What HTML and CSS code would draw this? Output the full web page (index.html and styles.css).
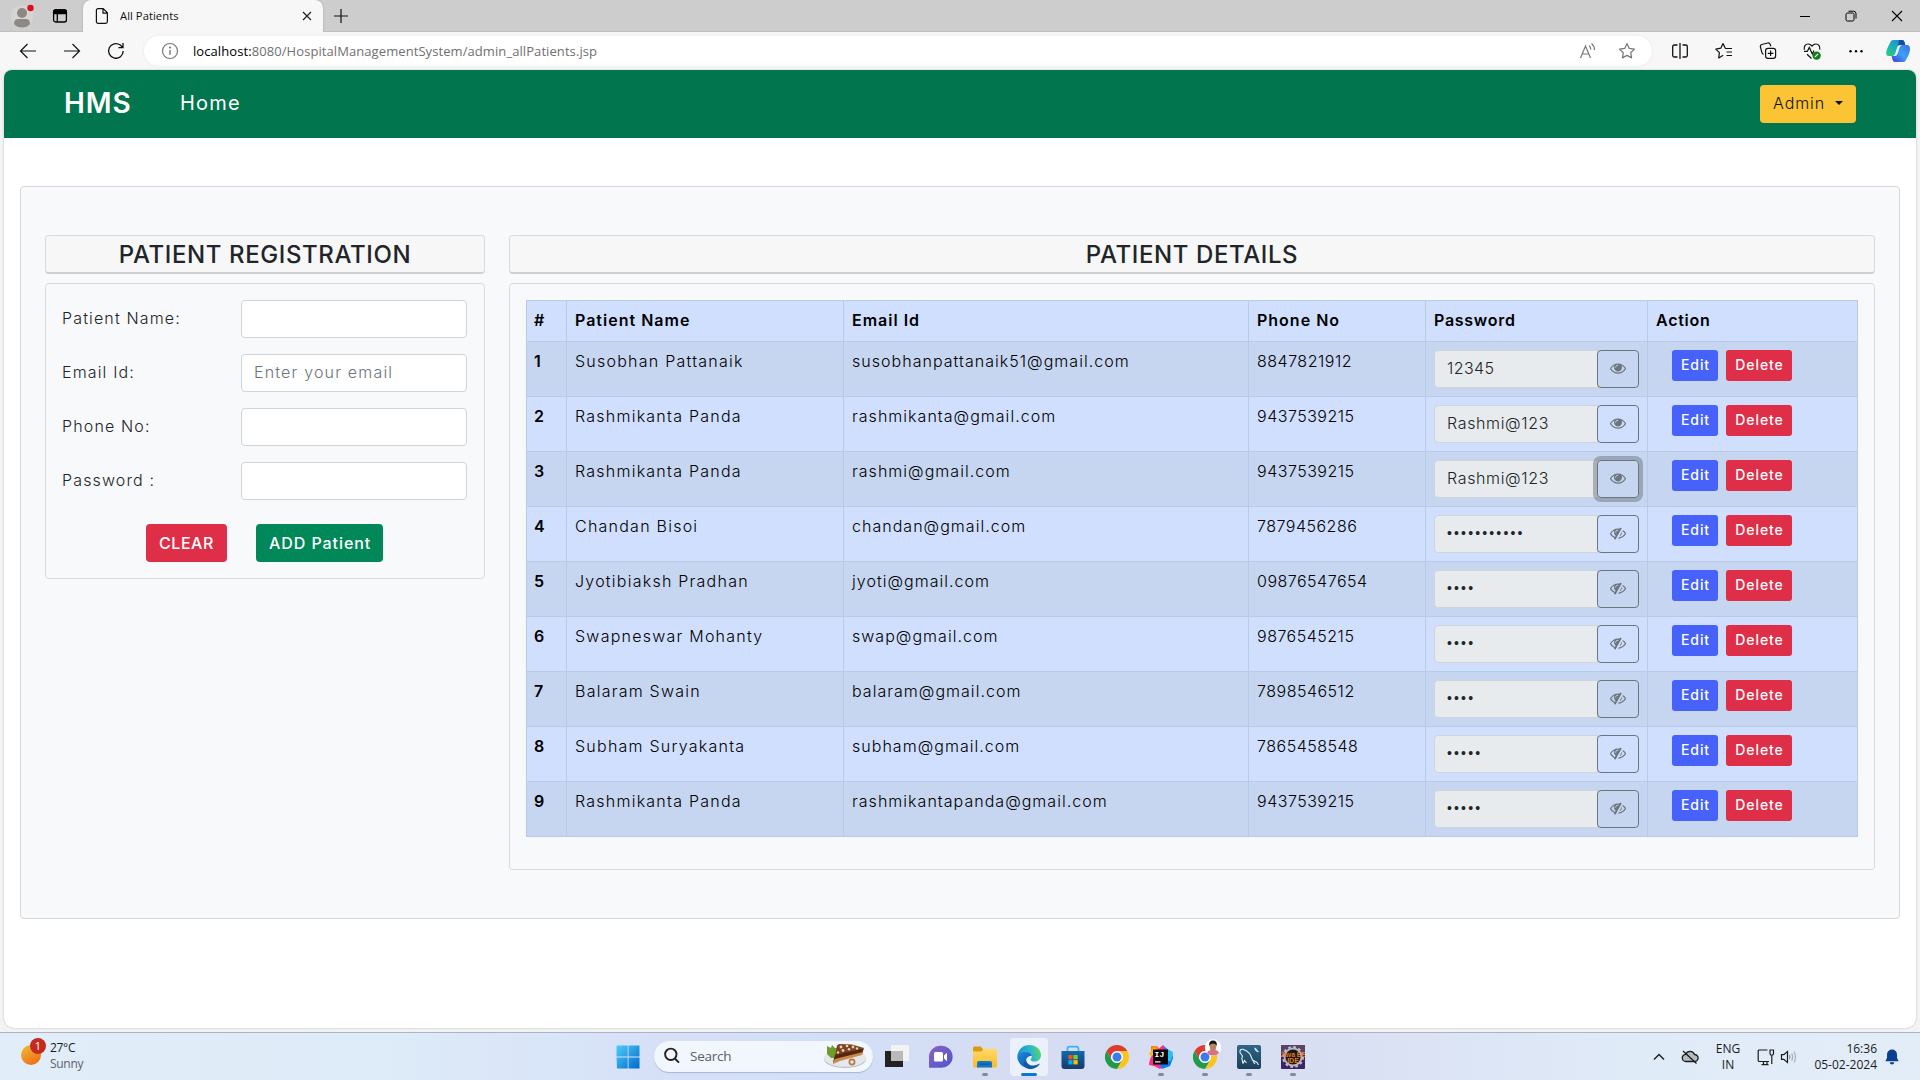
FILE: index.html
```html
<!DOCTYPE html>
<html lang="en">
<head>
<meta charset="utf-8">
<title>All Patients</title>
<link rel="stylesheet" href="styles.css">
</head>
<body>
<svg class="defs" width="0" height="0">
  <symbol id="eye" viewBox="0 0 1792 1792"><path d="M1664 960q-152-236-381-353 61 104 61 225 0 185-131.500 316.500t-316.500 131.500-316.500-131.500-131.500-316.500q0-121 61-225-229 117-381 353 133 205 333.500 326.500t434.500 121.500 434.500-121.500 333.500-326.500zm-720-384q0-20-14-34t-34-14q-125 0-214.500 89.500t-89.500 214.500q0 20 14 34t34 14 34-14 14-34q0-86 61-147t147-61q20 0 34-14t14-34zm848 384q0 34-20 69-140 230-376.500 368.500t-499.500 138.500-499.500-139-376.500-368q-20-35-20-69t20-69q140-229 376.500-368t499.500-139 499.500 139 376.500 368q20 35 20 69z"/></symbol>
  <symbol id="eye-slash" viewBox="0 0 1792 1792"><path d="M555 1335l78-141q-87-63-136-159t-49-203q0-121 61-225-229 117-381 353 167 258 427 375zm389-759q0-20-14-34t-34-14q-125 0-214.500 89.500t-89.500 214.500q0 20 14 34t34 14 34-14 14-34q0-86 61-147t147-61q20 0 34-14t14-34zm363-191q0 7-1 9-106 189-316 567t-315 566l-49 89q-10 16-28 16-12 0-134-70-16-10-16-28 0-12 44-87-143-65-263.500-173t-208.500-245q-20-31-20-69t20-69q153-235 380-371t496-136q89 0 180 17l54-97q10-16 28-16 5 0 18 6t31 15.500 33 18.500 31.500 18.500 19.500 11.500q16 10 16 27zm37 447q0 139-79 253.500t-209 164.500l280-502q8 45 8 84zm448 128q0 35-20 69-39 64-109 145-150 172-347.500 267t-419.500 95l74-132q212-18 392.500-137t301.500-307q-115-179-282-294l63-112q95 64 182.500 153t144.500 186q20 34 20 69z"/></symbol>
  <symbol id="chrome" viewBox="0 0 24 24"><path fill="#dd3c2f" d="M12 6H22.400A12 12 0 0 0 1.600 6L6.800 15A6 6 0 0 1 12 6Z"/><path fill="#fbc51e" d="M17.200 15L12 24A12 12 0 0 0 22.400 6H12A6 6 0 0 1 17.200 15Z"/><path fill="#229a48" d="M6.800 15L1.600 6A12 12 0 0 0 12 24L17.200 15A6 6 0 0 1 6.800 15Z"/><circle cx="12" cy="12" r="5.800" fill="#fff"/><circle cx="12" cy="12" r="4.500" fill="#3a7cec"/></symbol>
</svg>

<div class="tabstrip">
  <svg class="avatar" width="28" height="28" viewBox="0 0 28 28"><circle cx="14" cy="14.500" r="11" fill="#d8d5d0"/><circle cx="14" cy="11" r="5" fill="#8c8985"/><path d="M6 22q0-5 4-5h8q4 0 4 5-3 3.500-8 3.500T6 22z" fill="#8c8985"/><circle cx="22.500" cy="6" r="3.200" fill="#e00b1c"/></svg>
  <svg class="tabmenu" width="16" height="16" viewBox="0 0 16 16" fill="none" stroke="#000" stroke-width="1.300"><rect x="1.600" y="2" width="12.800" height="12" rx="2"/><path d="M1.600 3.500a1.500 1.500 0 0 1 1.500-1.500h9.800a1.500 1.500 0 0 1 1.500 1.500V5.600H1.600zM5.300 5v9" /><path d="M2 4h12" stroke-width="3"/></svg>
  <div class="tab">
    <svg width="14" height="18" viewBox="0 0 14 18" fill="none" stroke="#111" stroke-width="1.200"><path d="M3 1.600h5.200l4.200 4.200v8.700a1.800 1.800 0 0 1-1.800 1.800H3a1.600 1.600 0 0 1-1.600-1.600V3.200A1.600 1.600 0 0 1 3 1.600zM8 1.800v4.300h4.300"/></svg>
    <span class="tab-title">All Patients</span>
    <svg class="tab-close" width="10" height="10" viewBox="0 0 10 10" stroke="#222" stroke-width="1.200"><path d="M1 1l8 8M9 1l-8 8"/></svg>
  </div>
  <svg class="plus" width="16" height="16" viewBox="0 0 16 16" stroke="#111" stroke-width="1.200"><path d="M8 1v14M1 8h14"/></svg>
  <div class="winbtns">
    <svg width="12" height="12" viewBox="0 0 12 12" stroke="#000"><path d="M1 6.500h10"/></svg>
    <svg width="12" height="12" viewBox="0 0 12 12" fill="none" stroke="#000"><rect x="1" y="3" width="8" height="8" rx="1.500"/><path d="M3.500 1.200h5A2.500 2.500 0 0 1 11 3.700v4.800"/></svg>
    <svg width="12" height="12" viewBox="0 0 12 12" stroke="#000" stroke-width="1.100"><path d="M1 1l10 10M11 1L1 11"/></svg>
  </div>
</div>

<div class="toolbar">
  <svg class="nav" width="18" height="18" viewBox="0 0 18 18" fill="none" stroke="#111" stroke-width="1.200"><path d="M17 9H1.500M8.500 2l-7 7 7 7"/></svg>
  <svg class="nav" width="18" height="18" viewBox="0 0 18 18" fill="none" stroke="#111" stroke-width="1.200"><path d="M1 9h15.500M9.500 2l7 7-7 7"/></svg>
  <svg class="nav" width="18" height="18" viewBox="0 0 18 18" fill="none" stroke="#111" stroke-width="1.300"><path d="M16.200 9A7.300 7.300 0 1 1 13.300 3.100L15.800 5.400M16 1v4.600h-4.600"/></svg>
  <div class="address">
    <svg width="18" height="18" viewBox="0 0 18 18" fill="none" stroke="#777" stroke-width="1.200"><circle cx="9" cy="9" r="7.500"/><path d="M9 8v4.800" stroke-width="1.400"/><circle cx="9" cy="5.600" r=".5" fill="#777"/></svg>
    <span class="url"><b>localhost:</b>8080/HospitalManagementSystem/admin_allPatients.jsp</span>
    <svg class="read" width="18" height="18" viewBox="0 0 18 18" fill="none" stroke="#777" stroke-width="1.200"><path d="M1.500 16L6.500 4l5 12M3.300 12h6.500M10 3.500q1.800 1.500 1.800 4M12.500 1.500q3 2.500 3 6.500"/></svg>
    <svg width="18" height="18" viewBox="0 0 18 18" fill="none" stroke="#777" stroke-width="1.200" stroke-linejoin="round"><path d="M9 1.600l2.300 4.800 5.200.7-3.800 3.600.9 5.200L9 13.400l-4.600 2.500.9-5.200L1.500 7.100l5.200-.7z"/></svg>
  </div>
  <div class="tools">
    <svg width="18" height="18" viewBox="0 0 18 18" fill="none" stroke="#111" stroke-width="1.300"><path d="M9 1v16M6.500 3H3.200A1.500 1.500 0 0 0 1.700 4.500v9A1.500 1.500 0 0 0 3.200 15h3.300M11.500 3h3.300a1.500 1.500 0 0 1 1.500 1.500v9a1.500 1.500 0 0 1-1.500 1.500h-3.300"/></svg>
    <svg width="18" height="18" viewBox="0 0 18 18" fill="none" stroke="#111" stroke-width="1.200" stroke-linejoin="round"><path d="M10.300 6.300L8 1.600 5.800 6.200l-5 .9 3.600 3.500-.7 5.300L8.200 13.200M10.200 6.500H17M11.500 10h5.500M11.500 13.500H17"/></svg>
    <svg width="18" height="18" viewBox="0 0 18 18" fill="none" stroke="#111" stroke-width="1.200"><rect x="6.600" y="6.300" width="10" height="10" rx="2.300"/><path d="M11.600 8.500v5.600M8.800 11.300h5.600M4.500 12.400A3 3 0 0 1 2.800 10L1.400 4.800A2 2 0 0 1 2.800 2.500l6-1.500a2 2 0 0 1 2.300 1.200l.8 2"/></svg>
    <svg width="18" height="18" viewBox="0 0 18 18" fill="none" stroke="#111" stroke-width="1.200"><path d="M1.300 7.800C.6 4.500 2.500 2 5 2c2 0 3.200 1 4 2.200C9.800 3 11 2 13 2c2.500 0 4.400 2.500 3.700 5.600M1 9.400h3.300l2-4 3 6.500 1.700-3.500M4 12.200l4.500 4.300"/><circle cx="13.600" cy="13.600" r="4.200" fill="#107c1c" stroke="none"/><path d="M11.800 15.200l3.300-3.300" stroke="#fff"/></svg>
    <svg width="18" height="18" viewBox="0 0 18 18"><circle cx="3.500" cy="9.300" r="1.200"/><circle cx="9" cy="9.300" r="1.200"/><circle cx="14.500" cy="9.300" r="1.200"/></svg>
  </div>
  <svg class="copilot" width="24" height="24" viewBox="0 0 24 24"><defs><linearGradient id="cp1" x1="0" y1="1" x2="1" y2="0"><stop offset="0" stop-color="#2fd06b"/><stop offset=".4" stop-color="#18b4b4"/><stop offset="1" stop-color="#1f83e8"/></linearGradient><linearGradient id="cp2" x1="0" y1="1" x2="1" y2="0"><stop offset="0" stop-color="#4a35d8"/><stop offset=".5" stop-color="#3aa2f5"/><stop offset="1" stop-color="#3d70e4"/></linearGradient></defs><path fill="url(#cp1)" d="M7 1h9q2 0 2.500 2l.7 3H14q-2 0-2.700 2L9 15q-.7 2-3 2H2.500Q0 17 .3 13.500T4 4Q5 1 7 1z"/><path fill="#164f99" d="M13 1h3q2 0 2.500 2l.7 3H14q-1.400 0-2 .8z"/><path fill="url(#cp2)" d="M17 23H9q-2 0-2.400-2l-.9-4H9q1.700 0 2.400-2l2.400-7q.6-2 2.700-2H21q3 0 3 4t-3.700 10.500Q19.300 23 17 23z"/></svg>
</div>

<main class="viewport">
  <nav class="navbar">
    <span class="brand">HMS</span>
    <span class="home">Home</span>
    <button class="btn btn-warning">Admin<i class="caret"></i></button>
  </nav>

  <section class="panel">
    <div class="col-form">
      <h4 class="heading">PATIENT REGISTRATION</h4>
      <form class="card">
        <label class="field"><span>Patient Name:</span><input type="text"></label>
        <label class="field"><span>Email Id:</span><input type="text" placeholder="Enter your email"></label>
        <label class="field"><span>Phone No:</span><input type="text"></label>
        <label class="field"><span>Password :</span><input type="text"></label>
        <div class="form-actions"><button type="button" class="btn btn-danger caps">CLEAR</button><button type="button" class="btn btn-success">ADD Patient</button></div>
      </form>
    </div>
    <div class="col-table">
      <h4 class="heading">PATIENT DETAILS</h4>
      <div class="card">
        <table>
          <colgroup><col class="c-id"><col class="c-name"><col class="c-email"><col class="c-phone"><col class="c-pass"><col class="c-act"></colgroup>
          <thead><tr><th>#</th><th>Patient Name</th><th>Email Id</th><th>Phone No</th><th class="tight">Password</th><th class="tight">Action</th></tr></thead>
          <tbody>
            <tr><th>1</th><td class="name">Susobhan Pattanaik</td><td class="mail">susobhanpattanaik51@gmail.com</td><td>8847821912</td><td><div class="secret"><span class="digits">12345</span><button><svg><use href="#eye"/></svg></button></div></td><td><div class="acts"><button class="sm edit">Edit</button><button class="sm del">Delete</button></div></td></tr>
            <tr><th>2</th><td class="name">Rashmikanta Panda</td><td class="mail">rashmikanta@gmail.com</td><td>9437539215</td><td><div class="secret"><span>Rashmi@123</span><button><svg><use href="#eye"/></svg></button></div></td><td><div class="acts"><button class="sm edit">Edit</button><button class="sm del">Delete</button></div></td></tr>
            <tr><th>3</th><td class="name">Rashmikanta Panda</td><td class="mail">rashmi@gmail.com</td><td>9437539215</td><td><div class="secret"><span>Rashmi@123</span><button class="focused"><svg><use href="#eye"/></svg></button></div></td><td><div class="acts"><button class="sm edit">Edit</button><button class="sm del">Delete</button></div></td></tr>
            <tr><th>4</th><td class="name">Chandan Bisoi</td><td class="mail">chandan@gmail.com</td><td>7879456286</td><td><div class="secret"><span class="dots">•••••••••••</span><button><svg><use href="#eye-slash"/></svg></button></div></td><td><div class="acts"><button class="sm edit">Edit</button><button class="sm del">Delete</button></div></td></tr>
            <tr><th>5</th><td class="name">Jyotibiaksh Pradhan</td><td class="mail">jyoti@gmail.com</td><td>09876547654</td><td><div class="secret"><span class="dots">••••</span><button><svg><use href="#eye-slash"/></svg></button></div></td><td><div class="acts"><button class="sm edit">Edit</button><button class="sm del">Delete</button></div></td></tr>
            <tr><th>6</th><td class="name">Swapneswar Mohanty</td><td class="mail">swap@gmail.com</td><td>9876545215</td><td><div class="secret"><span class="dots">••••</span><button><svg><use href="#eye-slash"/></svg></button></div></td><td><div class="acts"><button class="sm edit">Edit</button><button class="sm del">Delete</button></div></td></tr>
            <tr><th>7</th><td class="name">Balaram Swain</td><td class="mail">balaram@gmail.com</td><td>7898546512</td><td><div class="secret"><span class="dots">••••</span><button><svg><use href="#eye-slash"/></svg></button></div></td><td><div class="acts"><button class="sm edit">Edit</button><button class="sm del">Delete</button></div></td></tr>
            <tr><th>8</th><td class="name">Subham Suryakanta</td><td class="mail">subham@gmail.com</td><td>7865458548</td><td><div class="secret"><span class="dots">•••••</span><button><svg><use href="#eye-slash"/></svg></button></div></td><td><div class="acts"><button class="sm edit">Edit</button><button class="sm del">Delete</button></div></td></tr>
            <tr><th>9</th><td class="name">Rashmikanta Panda</td><td class="mail">rashmikantapanda@gmail.com</td><td>9437539215</td><td><div class="secret"><span class="dots">•••••</span><button><svg><use href="#eye-slash"/></svg></button></div></td><td><div class="acts"><button class="sm edit">Edit</button><button class="sm del">Delete</button></div></td></tr>
          </tbody>
        </table>
      </div>
    </div>
  </section>
</main>

<footer class="taskbar">
  <div class="weather">
    <svg width="28" height="30" viewBox="0 0 28 30"><defs><linearGradient id="sun" x1=".2" y1="0" x2=".8" y2="1"><stop offset="0" stop-color="#ecb83a"/><stop offset="1" stop-color="#f26a10"/></linearGradient></defs><circle cx="11" cy="17" r="10" fill="url(#sun)"/><circle cx="18" cy="8" r="8" fill="#c42b1c"/><text x="18" y="12" text-anchor="middle" class="badge">1</text></svg>
    <div class="weather-text"><span>27°C</span><span class="dim">Sunny</span></div>
  </div>
  <div class="apps">
    <div class="slot"><svg width="24" height="24" viewBox="0 0 24 24"><defs><linearGradient id="win" gradientUnits="userSpaceOnUse" x1="0" y1="0" x2="24" y2="24"><stop offset="0" stop-color="#4fd0fb"/><stop offset="1" stop-color="#0067c8"/></linearGradient></defs><path fill="url(#win)" d="M1 .5h10.700v11H.5V1zM12.500.5h11v11h-11zM.5 12.400h11.200v11.100H1zM12.500 12.400h11v11.100h-11z"/></svg></div>
    <div class="search">
      <svg width="18" height="18" viewBox="0 0 18 18" fill="none" stroke="#222" stroke-width="1.900"><circle cx="7.800" cy="7.300" r="5.700"/><path d="M11.800 11.500l4.200 4.200"/></svg>
      <span>Search</span>
      <svg class="cake" width="44" height="26" viewBox="0 0 44 26"><ellipse cx="22" cy="16" rx="21" ry="9" fill="#b9bdc7"/><ellipse cx="22" cy="14.800" rx="21" ry="9" fill="#e6e7ea"/><path fill="#6f9c2c" d="M4 3l4 2 1-3 3 3 3 0-1 10-6 0-4-4z"/><path fill="#7b4326" d="M14 2.500L16 1l13 .5L41 5 12 13z"/><path fill="#57270f" d="M12 12L41 5l-2 6-24 6-5 2z"/><path fill="#c98a4e" d="M10 19l2-3 28-7-1 3-22 6-7 3z"/><g fill="#f0cfa4"><circle cx="18" cy="4" r="1.400"/><circle cx="24" cy="3" r="1.300"/><circle cx="30" cy="4" r="1.400"/><circle cx="20" cy="7.500" r="1.400"/><circle cx="26" cy="6.300" r="1.300"/><circle cx="34" cy="5.500" r="1.200"/><circle cx="15" cy="9.500" r="1.200"/></g><circle cx="29" cy="19" r="2.600" fill="none" stroke="#b37a4a" stroke-width="1.700"/></svg>
    </div>
    <div class="slot"><svg width="24" height="24" viewBox="0 0 24 24"><rect x="0" y="6" width="18" height="16" fill="#222"/><rect x="6" y="0" width="18" height="16" fill="#f3f3f3"/><rect x="6" y="6" width="12" height="10" fill="#b9b9b9"/></svg></div>
    <div class="slot"><svg width="24" height="24" viewBox="0 0 24 24"><defs><linearGradient id="chat" x1="0" y1="0" x2="1" y2="1"><stop offset="0" stop-color="#8f62c0"/><stop offset="1" stop-color="#4a55cf"/></linearGradient></defs><path fill="url(#chat)" d="M11.500.8A11 11 0 1 1 11.700 22.700H0V12A11 11 0 0 1 11.500.8z"/><rect x="5" y="7" width="9" height="9.500" rx="1.500" fill="#fff"/><path fill="#fff" d="M15 10.500l3-2.800v8.600l-3-2.800z"/></svg></div>
    <div class="slot run"><svg width="24" height="24" viewBox="0 0 24 24"><defs><linearGradient id="fold" x1="0" y1="0" x2="0" y2="1"><stop offset="0" stop-color="#ffd96b"/><stop offset="1" stop-color="#f9bd24"/></linearGradient></defs><path fill="#dc9a10" d="M0 3a1.500 1.500 0 0 1 1.500-1.500h6L10 4v4H0z"/><path fill="url(#fold)" d="M0 6.500h8l3-2.700h12a1 1 0 0 1 1 1V21a1.500 1.500 0 0 1-1.500 1.500h-21A1.500 1.500 0 0 1 0 21z"/><path fill="#1376c8" d="M4 22.500V18a2 2 0 0 1 2-2h11a2 2 0 0 1 2 2v4.500z"/><path fill="#0a5ba5" d="M7 18.500h9v1.500H7z"/></svg></div>
    <div class="slot run active"><svg width="24" height="24" viewBox="0 0 24 24"><defs><linearGradient id="e1" x1="0" y1=".5" x2="1" y2=".3"><stop offset="0" stop-color="#1c8fd8"/><stop offset=".6" stop-color="#2bb9c9"/><stop offset="1" stop-color="#5ddb55"/></linearGradient><linearGradient id="e2" x1="0" y1="0" x2="1" y2="1"><stop offset="0" stop-color="#1b8fe0"/><stop offset="1" stop-color="#0b4da0"/></linearGradient></defs><path fill="url(#e1)" d="M.3 11.500C.8 4.800 5.800 0 12.200 0 19 0 24 4.700 24 10.300c0 3.600-2.700 6.300-6.300 6.300-2.800 0-4.200-1-4.200-1.800 0-.6 1.300-1 1.300-3.200 0-2.800-3-5-7-5-3.400 0-6.300 2-7.500 4.900z"/><path fill="url(#e2)" d="M.3 12.800C.4 8.800 3.500 6.600 7.700 6.600c4.200 0 7 2.200 7.100 4.700-1-1.200-6 .2-5.700 4.900.3 3.800 3.800 6.400 7.400 6.200A12 12 0 0 1 .3 12.800z"/><path fill="#1258a8" d="M9.100 15c.3 3.500 3.500 5.500 7 5.500 3 0 5-1.200 6-1.800.5-.2.800.2.500.6A12 12 0 0 1 12 24c-5-.6-7-5.800-2.900-9z"/></svg></div>
    <div class="slot"><svg width="24" height="24" viewBox="0 0 24 24"><defs><linearGradient id="st" x1="0" y1="0" x2="0" y2="1"><stop offset="0" stop-color="#1268b0"/><stop offset="1" stop-color="#163a68"/></linearGradient></defs><path d="M6.500 7V3.500A1.800 1.800 0 0 1 8.300 1.700h7.400a1.800 1.800 0 0 1 1.800 1.800V7" fill="none" stroke="#35b6ee" stroke-width="1.700"/><path fill="url(#st)" d="M.5 6h23v15a3 3 0 0 1-3 3h-17a3 3 0 0 1-3-3z"/><path fill="#f1511b" d="M7.300 10h4.300v4.300H7.300z"/><path fill="#80cc28" d="M12.400 10h4.300v4.300h-4.300z"/><path fill="#00adef" d="M7.300 15.100h4.300v4.300H7.300z"/><path fill="#fbbc09" d="M12.400 15.100h4.300v4.300h-4.300z"/></svg></div>
    <div class="slot"><svg width="24" height="24"><use href="#chrome"/></svg></div>
    <div class="slot run"><svg width="24" height="24" viewBox="0 0 24 24"><path fill="#fc801d" d="M2 1l6 0 4 4-6 13-6 2 2-9z"/><path fill="#fdb60d" d="M0 9l5-7 3 3-4 8z"/><path fill="#fe2d8b" d="M1 14l6-8 7-6 5 5-2 15-6 4-6-3-5-1z"/><path fill="#087cfa" d="M15 2l8 5 1 6-3 8-8 3-2-4z"/><path fill="#23c4f0" d="M17 4l7 3-2 9-3 0z"/><rect x="4" y="4.500" width="15" height="15" fill="#0a0508"/><text x="5.600" y="11.800" class="ij">IJ</text><path fill="#fff" d="M6 16.300h5.500v1.200H6z"/></svg></div>
    <div class="slot run"><svg class="wide" width="32" height="30" viewBox="0 0 32 30"><use href="#chrome" x="4" y="6" width="24" height="24"/><circle cx="24" cy="8.500" r="8.200" fill="#fff"/><path fill="#d9708a" d="M18 14q1-3 4.500-3h3q3.500 0 4.500 3-2.500 2.500-6 2.500T18 14z"/><ellipse cx="24" cy="7.500" rx="3.300" ry="4.500" fill="#b98468"/><path fill="#1b1514" d="M20.300 7q-.8-5.500 3.700-5.500T27.700 7q-.8-2.500-3.700-2.500T20.300 7z"/></svg></div>
    <div class="slot run"><svg width="24" height="24" viewBox="0 0 24 24"><defs><linearGradient id="my" x1="0" y1="0" x2="0" y2="1"><stop offset="0" stop-color="#2f6787"/><stop offset="1" stop-color="#1a4059"/></linearGradient></defs><rect width="24" height="24" rx="2" fill="url(#my)"/><path fill="none" stroke="#e4eff5" stroke-width="1.100" d="M6 18.500L4.800 13.500 5.500 11 3 7.500Q2.600 3.600 6 4.300 10 5.500 13 9L15.500 15l4.500 2.500 1.500 2.500M16 16.500l2 2.500M6 18.500l1.500-3 2 2.500"/><path fill="#d5e6ef" d="M17 2.500l2 .8 2 2.800 1.300.4-2 .8-2.300-2z"/></svg></div>
    <div class="slot run"><svg width="24" height="24" viewBox="0 0 24 24"><rect width="24" height="24" rx="1" fill="#3d2467"/><path fill="#5b4260" d="M0 0h24v9H0z"/><circle cx="12" cy="12" r="8.500" fill="#1b1720" stroke="#b9b6bc" stroke-width="1.800"/><circle cx="12" cy="12" r="10" fill="none" stroke="#c3c0c5" stroke-width="1.800" stroke-dasharray="2.700 2.536"/><text x="12" y="11.500" text-anchor="middle" class="jee">Java EE</text><text x="12" y="17.500" text-anchor="middle" class="jee ide">IDE</text></svg></div>
  </div>
  <div class="tray">
    <svg class="chev" width="12" height="12" viewBox="0 0 12 12" fill="none" stroke="#222" stroke-width="1.500"><path d="M1 8.500l5-5 5 5"/></svg>
    <svg class="cloud" width="18" height="16" viewBox="0 0 18 16" fill="none" stroke="#1c1c1c" stroke-width="1.300"><path fill="#b6babd" d="M5 12.500A3.600 3.600 0 0 1 4.700 5.300 4.700 4.700 0 0 1 13.500 5.500a3.500 3.500 0 0 1 .2 7z"/><path d="M2 2l13.500 12.500"/></svg>
    <div class="lang"><span>ENG</span><span>IN</span></div>
    <svg class="net" width="18" height="18" viewBox="0 0 18 18" fill="none" stroke="#1c1c1c" stroke-width="1.200"><path d="M10.500 2H2.200a1 1 0 0 0-1 1v9.500a1 1 0 0 0 1 1H12M4.500 16.700h7M6.500 13.500v3M10 13.500v3M13 2h3.500v3.500a1.700 1.700 0 0 1-3.500 0zM14.800 7.500V16"/></svg>
    <svg class="vol" width="18" height="16" viewBox="0 0 18 16" fill="none" stroke="#1c1c1c" stroke-width="1.200"><path d="M1.500 5.700h2.300L7.500 2.500v11L3.800 10.300H1.500z"/><path stroke="#8d959c" d="M9.500 6q1 2 0 4"/><path stroke="#a9b2ba" d="M11.700 4.300q2 3.700 0 7.400M14 2.500q3 5.500 0 11"/></svg>
    <div class="clock"><span>16:36</span><span>05-02-2024</span></div>
    <svg class="bell" width="14" height="16" viewBox="0 0 14 16" fill="#0a3f8f"><path d="M7 .5a5 5 0 0 1 5 5V9l1.700 3.300H.3L2 9V5.500a5 5 0 0 1 5-5zM4.800 13.300h4.400a2.200 2.200 0 0 1-4.400 0z"/></svg>
  </div>
</footer>
</body>
</html>
```
FILE: styles.css
```css
* { box-sizing: border-box; }
body {
  margin: 0;
  width: 1920px;
  height: 1080px;
  overflow: hidden;
  display: flex;
  flex-direction: column;
  background: #f3f3f3;
  color: #212529;
  font: 350 16px/24px Inter, sans-serif;
}
.defs { position: absolute; }
svg { display: block; flex: none; }
button { font: inherit; border: 0; white-space: nowrap; }

/* Browser chrome */
.tabstrip {
  height: 32px;
  display: flex;
  align-items: center;
  background: #cdcdcd;
  padding-left: 8px;
  box-shadow: inset 0 -1px #c0c0c0;
}
.tabmenu { margin-left: 16px; }
.tab {
  width: 240px;
  height: 32px;
  margin-left: 15px;
  padding: 0 11px 0 12px;
  display: flex;
  align-items: center;
  background: #f7f7f7;
  border-radius: 8px 8px 0 0;
  box-shadow: 0 0 2px #999;
  clip-path: inset(0 -3px 0 -3px);
}
.tab-title { margin-left: 11px; color: #111; font: 11.2px/16px "Open Sans", sans-serif; letter-spacing: .06px; }
.tab-close { margin-left: auto; }
.plus { margin-left: 10px; }
.winbtns { margin-left: auto; display: flex; gap: 34px; padding-right: 17px; }
.toolbar {
  height: 38px;
  display: flex;
  align-items: center;
  background: #f7f7f7;
  padding: 0 10px 0 19px;
}
.nav { margin-right: 26px; }
.address {
  width: 1508px;
  height: 30px;
  margin-left: -7px;
  padding: 0 16px 0 17px;
  display: flex;
  align-items: center;
  border-radius: 15px;
  background: #fff;
  box-shadow: 0 0 3px #e6e6e6;
}
.url { margin-left: 14px; color: #707070; font: 13px/18px "Open Sans", sans-serif; letter-spacing: .08px; }
.url b { font-weight: 400; color: #000; }
.read { margin: 0 21px 0 auto; }
.tools { display: flex; gap: 26px; margin-left: 19px; }
.copilot { margin-left: auto; }

/* Page */
.viewport {
  height: 958px;
  margin: 0 4px;
  background: #fff;
  border-radius: 8px 8px 10px 10px;
  box-shadow: 0 0 2px #b5b5b5;
  overflow: hidden;
}
.navbar {
  height: 68px;
  padding: 0 60px 2px 60px;
  display: flex;
  align-items: center;
  background: #00754e;
  color: #fff;
}
.brand { width: 116px; font-size: 28px; font-weight: 600; letter-spacing: .9px; }
.home { font-size: 20px; font-weight: 400; letter-spacing: 1.200px; }
.btn {
  height: 38px;
  padding: 0 0 1px 13px;
  display: inline-flex;
  align-items: center;
  border-radius: 4px;
  color: #fff;
  font-weight: 450;
  letter-spacing: .93px;
}
.btn-warning { width: 96px; margin: 2px 0 0 auto; background: #fbc435; color: #111; font-weight: 350; padding-bottom: 2px; }
.caret { margin-left: 10px; border: 4.500px solid transparent; border-top-color: #111; border-bottom: 0; }
.btn-danger { background: #df2f48; }
.caps { width: 81px; letter-spacing: .55px; }
.btn-success { width: 127px; background: #008858; }

.panel {
  margin: 48px 16px 0;
  height: 733px;
  padding: 48px 24px;
  display: flex;
  align-items: flex-start;
  gap: 24px;
  border: 1px solid #d5d8dc;
  border-radius: 4px;
  background: #f8f9fb;
}
.col-form { width: 440px; }
.col-table { width: 1366px; }
.heading {
  margin: 0 0 9px;
  height: 39px;
  display: flex;
  justify-content: center;
  padding-top: 5px;
  border: 1px solid #dadbdc;
  border-bottom: 2px solid #d0d0d0;
  border-radius: 4px;
  background: #f7f7f7;
  font-size: 24px;
  line-height: 27px;
  font-weight: 550;
  letter-spacing: .6px;
}
.card { border: 1px solid #d8dbdf; border-radius: 4px; padding: 16px; }
.col-form .card { height: 296px; padding-right: 17px; }
.field {
  display: flex;
  align-items: center;
  justify-content: space-between;
  margin-bottom: 16px;
  letter-spacing: 1.150px;
}
.field span { padding-bottom: 2px; }
.field input {
  width: 226px;
  height: 38px;
  padding: 0 12px 2px;
  border: 1px solid #ced4da;
  border-radius: 4px;
  background: #fff;
  font: inherit;
  letter-spacing: 1.180px;
}
.field input::placeholder { color: #6c757d; opacity: 1; }
.form-actions { display: flex; gap: 29px; padding: 8px 0 0 84px; }

.col-table .card { height: 587px; padding-right: 17px; }
table { width: 1331px; border-collapse: collapse; table-layout: fixed; color: #000; }
.c-id { width: 40px; }
.c-name { width: 277px; }
.c-email { width: 405px; }
.c-phone { width: 177px; }
.c-pass { width: 222px; }
.c-act { width: 210px; }
th, td { border: 1px solid #b9c9e8; padding: 7px 8px 9px; text-align: left; vertical-align: top; }
th { font-weight: 600; letter-spacing: 1px; }
th:first-child { padding-left: 7px; }
.tight { letter-spacing: .73px; }
td { letter-spacing: .5px; }
.name { letter-spacing: 1.240px; }
.mail { letter-spacing: 1.030px; }
tr { background: #d0dffe; }
tbody tr:nth-child(odd) { background: #c6d6f1; }
tbody tr { height: 55px; }
.secret { display: flex; height: 38px; margin: 1px 0 -1px; }
.secret span {
  flex: 1;
  padding: 5px 12px;
  border: 1px solid #ced4da;
  border-radius: 4px 0 0 4px;
  background: #e8ebed;
  color: #212529;
  letter-spacing: .65px;
}
.secret .digits { letter-spacing: .4px; }
.secret .dots { padding-top: 5px; font: 14px/24px "Liberation Sans", Arial, sans-serif; letter-spacing: 2.150px; }
.secret button {
  width: 42px;
  margin-left: -1px;
  padding: 0 0 2px;
  display: flex;
  align-items: center;
  justify-content: center;
  border: 1px solid #6c757d;
  border-radius: 4px;
  background: transparent;
}
.secret svg { width: 16px; height: 16px; fill: #6c757d; }
.secret .focused { box-shadow: 0 0 0 4px rgba(108, 117, 125, .5); }
.acts { display: flex; gap: 8px; margin: 1px 0 -1px; padding-left: 16px; }
.sm {
  height: 31px;
  padding: 0 0 1px 1px;
  border-radius: 3px;
  color: #fff;
  font-size: 14px;
  font-weight: 450;
  letter-spacing: .9px;
}
.edit { width: 46px; background: #4662fb; }
.del { width: 66px; background: #df2f48; }

/* Taskbar */
.taskbar {
  margin-top: 4px;
  height: 48px;
  display: flex;
  align-items: center;
  border-top: 1px solid #aeb4bf;
  background: linear-gradient(90deg, #e1edf8 0, #deebf8 20%, #d6e1f8 34%, #d3dff8 43%, #d6dcf1 55%, #d9e0f3 70%, #e0ebf8 85%, #e2edf8 100%);
  font: 12px/16px "Open Sans", sans-serif;
  color: #1b1b1b;
}
.weather { width: 606px; display: flex; padding: 0 0 4px 20px; }
.weather-text { display: flex; flex-direction: column; margin-left: 2px; padding-top: 2px; letter-spacing: -.3px; }
.dim { color: #5c626a; }
.badge { font: 11px "Open Sans", sans-serif; fill: #fff; }
.apps { display: flex; align-items: center; }
.slot {
  width: 44px;
  height: 46px;
  display: flex;
  flex-direction: column;
  align-items: center;
  padding-top: 11px;
}
.slot .wide { margin: -6px 0 0 0; }
.run::after { content: ""; width: 6px; height: 3px; margin-top: 4px; border-radius: 2px; background: #858994; }
.active {
  width: 38px;
  height: 38px;
  margin: 0 3px;
  padding-top: 7px;
  border-radius: 4px;
  background: #ebf0fb;
}
.active::after { width: 16px; background: #0a78d6; }
.search {
  width: 219px;
  height: 31px;
  margin: 0 2px 1px 4px;
  padding: 0 6px 0 9px;
  display: flex;
  align-items: center;
  border-radius: 16px;
  background: #f2f6fd;
  box-shadow: 0 1px 1px #a9b6cf;
}
.search span { margin-left: 9px; color: #5b5f66; font-size: 13.500px; letter-spacing: -.25px; }
.cake { margin-left: auto; }
.tray { margin-left: auto; display: flex; align-items: center; padding-right: 21px; }
.chev { margin-right: -1px; }
.cloud { margin-left: 17px; }
.lang { width: 40px; margin: 0 9px 0 9px; display: flex; flex-direction: column; align-items: center; }
.vol { margin-left: 5px; }
.clock { width: 79px; display: flex; flex-direction: column; align-items: flex-end; }
.bell { margin-left: 8px; }
.ij { font: 700 8px "Liberation Mono", monospace; fill: #fff; }
.jee { font: 700 6.500px "Liberation Sans", Arial, sans-serif; fill: #e57a1e; }
.ide { font-size: 7px; }
```
